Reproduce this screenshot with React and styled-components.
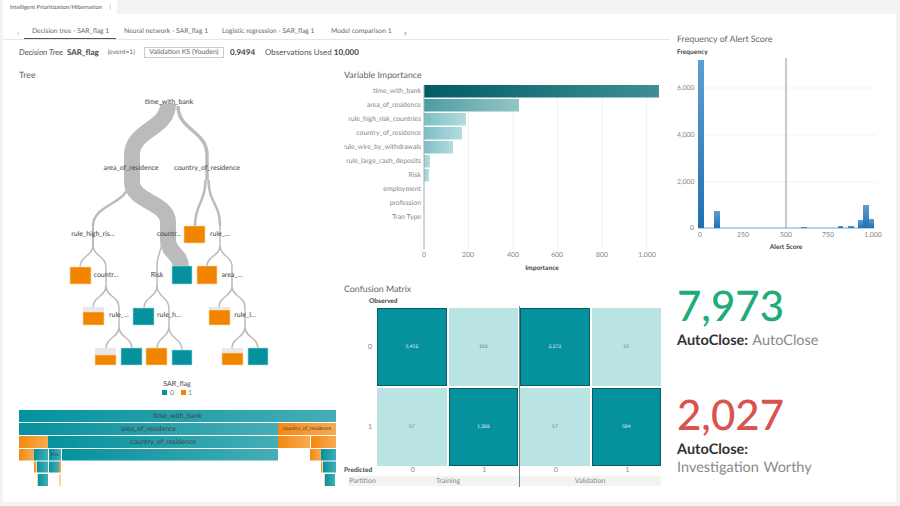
import React from "react";
import styled, { createGlobalStyle } from "styled-components";

const GlobalStyle = createGlobalStyle`
  html, body { margin: 0; padding: 0; background: #f2f3f5; }
  body {
    font-family: Lato, "Noto Sans", "Liberation Sans", sans-serif;
    color: #444;
    text-rendering: geometricPrecision;
  }
`;

const TEAL = "#05929e";
const ORANGE = "#f28500";

const Page = styled.div`
  width: 900px;
  height: 506px;
  box-sizing: border-box;
  padding: 0 4px 4px 3px;
  display: flex;
  flex-direction: column;
  overflow: hidden;
  background: #f2f3f5;
`;
const TopBar = styled.div`
  height: 14px;
  flex: none;
  display: flex;
`;
const ActiveTab = styled.div`
  width: 114px;
  box-sizing: border-box;
  padding-left: 7px;
  background: #fff;
  display: flex;
  align-items: center;
  justify-content: space-between;
  font-size: 5.75px;
  color: #555;
  span:last-child { padding-right: 6px; color: #888; }
`;
const Main = styled.div`
  flex: 1;
  min-height: 0;
  background: #fff;
  display: flex;
`;
const LeftPane = styled.div`
  width: 667px;
  flex: none;
  padding-top: 11px;
`;
const SubTabs = styled.div`
  height: 14px;
  display: flex;
  align-items: center;
  padding-left: 14px;
  border-bottom: 1px solid #e6e6e6;
  font-size: 6.75px;
  color: #666;
`;
const Chevron = styled.span`
  width: ${(p) => p.$w}px;
  color: ${(p) => p.$color};
  font-size: 9px;
`;
const SubTab = styled.div`
  box-sizing: border-box;
  width: ${(p) => p.$w}px;
  height: 14px;
  line-height: 13px;
  padding-left: 8px;
  white-space: nowrap;
  border-bottom: ${(p) => (p.$active ? "1px solid #555" : "none")};
`;
const SummaryRow = styled.div`
  height: 14px;
  margin-top: 5px;
  padding-left: 16px;
  display: flex;
  align-items: center;
  font-size: 8px;
  color: #555;
  white-space: nowrap;
  i { margin-right: 4px; }
  b { color: #444; }
`;
const EventNote = styled.span`
  font-size: 6.6px;
  margin: 0 9px;
  color: #666;
`;
const MetricButton = styled.div`
  box-sizing: border-box;
  width: 80px;
  height: 11px;
  border: 1px solid #ccc;
  font-size: 7px;
  line-height: 9px;
  text-align: center;
  color: #666;
  margin-right: 6px;
`;
const MetricValue = styled.b`
  margin-right: 10px;
`;
const Body = styled.div`
  display: grid;
  grid-template-columns: 325px 326px;
  padding-left: 16px;
  margin-top: 10px;
`;
const Column = styled.div`
  display: flex;
  flex-direction: column;
`;
const Title = styled.div`
  height: 12px;
  line-height: 12px;
  font-size: 8.85px;
  color: #666;
`;
const Chart = styled.svg`
  display: block;
  flex: none;
`;
const TreeText = styled.text`
  font-size: 7px;
  fill: #444;
  text-anchor: middle;
  dominant-baseline: central;
`;
const AxisText = styled.text`
  font-size: 6.9px;
  fill: #888;
  text-anchor: ${(p) => p.$anchor || "middle"};
  dominant-baseline: central;
`;
const AxisTitle = styled.text`
  font-size: 6.6px;
  font-weight: 700;
  fill: #444;
  text-anchor: ${(p) => p.$anchor || "middle"};
  dominant-baseline: central;
`;
const Matrix = styled.div`
  position: relative;
  width: 325px;
  height: 192px;
`;
const MatrixHead = styled.div`
  height: 12px;
  line-height: 12px;
  padding-left: 25px;
  margin-bottom: 1px;
  font-size: 6.6px;
  font-weight: 700;
  color: #444;
`;
const MatrixGrid = styled.div`
  display: grid;
  grid-template-columns: 31px repeat(4, 69.5px);
  grid-auto-rows: 78px;
  gap: 2px;
`;
const RowLabel = styled.div`
  display: flex;
  align-items: center;
  justify-content: flex-end;
  padding-right: 3px;
  font-size: 7px;
  color: #888;
`;
const Cell = styled.div`
  box-sizing: border-box;
  display: flex;
  align-items: center;
  justify-content: center;
  font-size: 5px;
  background: ${(p) => (p.$strong ? TEAL : "#bae3e3")};
  color: ${(p) => (p.$strong ? "#e6f6f6" : "#4d7476")};
  border: ${(p) => (p.$strong ? "1px solid #035f66" : "none")};
`;
const PredictedRow = styled.div`
  display: grid;
  grid-template-columns: 33px repeat(4, 71.5px);
  height: 11px;
  margin-top: -1px;
  line-height: 11px;
  font-size: 7px;
  color: #888;
  text-align: center;
`;
const PredictedLabel = styled.div`
  text-align: left;
  font-size: 6.6px;
  font-weight: 700;
  color: #444;
  white-space: nowrap;
`;
const PartitionRow = styled.div`
  margin-left: 4px;
  width: 313px;
  height: 10px;
  display: grid;
  grid-template-columns: 29px 142px 142px;
  background: #f3f3f3;
  line-height: 10px;
  font-size: 7px;
  color: #888;
  text-align: center;
`;
const PartitionLine = styled.div`
  position: absolute;
  left: 175px;
  top: 11px;
  width: 1px;
  height: 181px;
  background: #808080;
`;
const RightPane = styled.div`
  flex: 1;
  padding: 19px 0 0 7px;
`;
const Kpi = styled.div`
  margin-top: ${(p) => p.$top}px;
`;
const KpiValue = styled.div`
  height: 48px;
  line-height: 48px;
  font-size: 42px;
  font-weight: 500;
  color: ${(p) => p.$color};
`;
const KpiLabel = styled.div`
  margin-top: 3px;
  line-height: 18px;
  font-size: 14.5px;
  word-spacing: 1px;
  color: #8a8a8a;
  b { color: #333; }
`;

const curve = (x1, y1, x2, y2) => {
  const m = (y1 + y2) / 2;
  return `M${x1} ${y1}C${x1} ${m} ${x2} ${m} ${x2} ${y2}`;
};

const treeLinks = [
  [178, 106, 207, 155, 3.5], [207, 155, 207, 180, 3.5],
  [205.5, 180, 195, 226, 2.5], [208.5, 180, 220, 226, 2.5],
  [220, 226, 220, 248, 1.5], [220, 246, 207, 266, 1.5], [220, 246, 232, 266, 1.5],
  [232, 266, 232, 288, 1.5], [232, 286, 219, 307, 1.5], [232, 286, 245, 307, 1.5],
  [245, 307, 245, 328, 1.5], [245, 327, 232, 348, 1.5], [245, 327, 258, 348, 1.5],
  [129, 182, 93, 226, 2.5], [93, 226, 93, 246, 2],
  [93, 245, 80, 267, 1.5], [93, 245, 106, 267, 1.5],
  [106, 267, 106, 288, 1.5], [106, 286, 93, 307, 1.5], [106, 286, 119, 307, 1.5],
  [119, 307, 119, 328, 1.5], [119, 327, 106, 348, 1.5], [119, 327, 132, 348, 1.5],
  [162, 240, 157, 266, 1.5], [157, 266, 157, 288, 1.5],
  [157, 286, 144, 308, 1.5], [157, 286, 169, 308, 1.5],
  [169, 308, 169, 328, 1.5], [169, 327, 157, 348, 1.5], [169, 327, 182, 350, 1.5],
];

const treeNodes = [
  [184, 226, 21, 17, ORANGE], [70, 267, 21, 17, ORANGE], [172, 266, 20, 18, TEAL],
  [197, 266, 20, 18, ORANGE], [133, 308, 21, 17, TEAL],
  [83, 312, 21, 13, ORANGE, 307], [209, 310, 21, 15, ORANGE, 307],
  [95, 355, 21, 10, ORANGE, 348], [121, 348, 21, 17, TEAL], [146, 348, 21, 17, ORANGE],
  [172, 350, 20, 15, TEAL], [222, 353, 21, 12, ORANGE, 348], [248, 348, 20, 17, TEAL],
];

const treeLabels = [
  ["time_with_bank", 169, 102], ["area_of_residence", 131, 168],
  ["country_of_residence", 207, 168], ["rule_high_ris...", 93, 234],
  ["countr...", 169, 234], ["rule_...", 220, 234], ["countr...", 106, 275],
  ["Risk", 157, 275], ["area_...", 232, 275], ["rule_...", 119, 315],
  ["rule_h...", 169, 315], ["rule_l...", 245, 315],
];

const icicle = [
  [19, 410, 317, 12, "t", "time_with_bank"],
  [19, 423, 259, 12, "t", "area_of_residence"], [278, 423, 58, 12, "o", "country_of_residence", 5.2],
  [19, 436, 29, 12, "o"], [48, 436, 230, 12, "t", "country_of_residence"],
  [278, 436, 32, 12, "o"], [311, 436, 25, 12, "o"],
  [19, 449, 15, 11.5, "o"], [34, 449, 14, 11.5, "t"], [49, 449, 12, 11.5, "t", "Risk", 4.5],
  [62, 449, 216, 11.5, "t"], [310, 449, 11, 11.5, "o"], [321, 449, 15, 11.5, "t"],
  [34, 461.5, 2.5, 11, "o"], [37, 461.5, 11, 11, "t"], [49, 461.5, 10, 11, "t"], [59, 461.5, 2, 11, "o"],
  [321, 461.5, 1.5, 11, "o"], [323, 461.5, 13, 11, "t"],
  [37, 474, 1.5, 12, "l"], [38, 474, 10, 12, "t"], [59, 474, 2, 12, "l"],
  [324, 474, 1.5, 12, "l"], [325, 474, 10, 12, "t"],
];

const importance = [
  ["time_with_bank", 659, "vi0"], ["area_of_residence", 519, "vi1"],
  ["rule_high_risk_countries", 466, "vi2"], ["country_of_residence", 462, "vi2"],
  ["rule_wire_by_withdrawals", 453, "vi2"], ["rule_large_cash_deposits", 430, "vi3"],
  ["Risk", 429, "vi3"], ["employment"], ["profession"], ["Tran Type"],
];

const histogram = [
  [698, 704, 60], [714, 720, 211], [801, 807, 227], [838, 843, 226],
  [848, 854, 226], [858, 863, 220], [863, 869, 205], [869, 874, 219],
];

const matrixRows = [
  ["0", [["5,452", 1], ["103", 0], ["2,373", 1], ["51", 0]]],
  ["1", [["57", 0], ["1,388", 1], ["17", 0], ["584", 1]]],
];

const HGrad = ({ id, from, to }) => (
  <linearGradient id={id} x1="0" x2="1" y1="0" y2="0">
    <stop offset="0" stopColor={from} />
    <stop offset="1" stopColor={to} />
  </linearGradient>
);

const TreeChart = () => (
  <Chart width="325" height="324" viewBox="19 81 325 324">
    <path
      d={`${curve(168, 104, 132, 155)}L132 182${curve(132, 182, 168, 222).replace("M132 182", "")}L168 240${curve(168, 240, 181, 267).replace("M168 240", "")}`}
      fill="none" stroke="#bbb" strokeWidth="16"
    />
    {treeLinks.map(([x1, y1, x2, y2, w], i) => (
      <path key={i} d={curve(x1, y1, x2, y2)} fill="none" stroke="#bbb" strokeWidth={w} />
    ))}
    {treeNodes.map(([x, y, w, h, color, capTop], i) => (
      <g key={i}>
        {capTop && <rect x={x} y={capTop} width={w} height={y - capTop} fill="#e8e8e8" />}
        <rect x={x} y={y} width={w} height={h} fill={color}
          stroke={color === TEAL ? "#a5dcdf" : "#fbd6a6"} strokeWidth="0.6" />
      </g>
    ))}
    {treeLabels.map(([text, x, y], i) => (
      <TreeText key={i} x={x} y={y}>{text}</TreeText>
    ))}
    <TreeText x="177" y="384">SAR_flag</TreeText>
    <rect x="162" y="390" width="5" height="5" fill={TEAL} />
    <AxisText x="172" y="392.5">0</AxisText>
    <rect x="181" y="390" width="5" height="5" fill={ORANGE} />
    <AxisText x="190" y="392.5">1</AxisText>
  </Chart>
);

const IcicleChart = () => (
  <Chart width="325" height="85" viewBox="19 405 325 85">
    <defs>
      <HGrad id="ict" from="#05929e" to="#45adb6" />
      <HGrad id="ico" from="#f28a10" to="#f9aa52" />
      <HGrad id="icl" from="#fbd3a0" to="#fbd3a0" />
    </defs>
    {icicle.map(([x, y, w, h, kind, text, size], i) => (
      <g key={i}>
        <rect x={x} y={y} width={w} height={h} fill={`url(#ic${kind})`} />
        {text && (
          <TreeText x={x + w / 2} y={y + h / 2} style={size ? { fontSize: size } : undefined}>{text}</TreeText>
        )}
      </g>
    ))}
  </Chart>
);

const ImportanceChart = () => (
  <Chart width="325" height="202" viewBox="344 81 325 202">
    <defs>
      <HGrad id="vi0" from="#005c63" to="#3f8f95" />
      <HGrad id="vi1" from="#4a9da3" to="#94c5c8" />
      <HGrad id="vi2" from="#7cbfc5" to="#b3dcde" />
      <HGrad id="vi3" from="#94d0d5" to="#b3e0e2" />
    </defs>
    {[468.5, 513, 557.5, 602, 646.5].map((x) => (
      <line key={x} x1={x} x2={x} y1="85" y2="249" stroke="#ececec" strokeWidth="0.8" />
    ))}
    {importance.map(([name, end, fill], i) => (
      <g key={name}>
        <AxisText $anchor="end" x="421" y={91 + i * 14}>{name}</AxisText>
        {end && <rect x="424" y={85 + i * 14} width={end - 424} height="12.5" fill={`url(#${fill})`} />}
      </g>
    ))}
    <line x1="424" x2="424" y1="85" y2="249" stroke="#aaa" strokeWidth="1" />
    {[["0", 424], ["200", 468], ["400", 513], ["600", 557], ["800", 602], ["1,000", 647]].map(([t, x]) => (
      <AxisText key={t} x={x} y="255">{t}</AxisText>
    ))}
    <AxisTitle x="542" y="268">Importance</AxisTitle>
  </Chart>
);

const AlertChart = () => (
  <Chart width="216" height="210" viewBox="677 45 216 210">
    <defs>
      <linearGradient id="hist" x1="0" x2="0" y1="0" y2="1">
        <stop offset="0" stopColor="#5f9fd2" />
        <stop offset="1" stopColor="#1f70b2" />
      </linearGradient>
    </defs>
    <AxisTitle $anchor="start" x="677" y="51.5">Frequency</AxisTitle>
    {[["6,000", 88], ["4,000", 135], ["2,000", 182], ["0", 228]].map(([t, y]) => (
      <g key={t}>
        {y < 228 && <line x1="700" x2="877" y1={y} y2={y} stroke="#f0f0f0" strokeWidth="0.8" />}
        <AxisText $anchor={y < 228 ? "start" : "end"} x={y < 228 ? 677 : 694} y={y}>{t}</AxisText>
      </g>
    ))}
    <line x1="698" x2="874" y1="228" y2="228" stroke="#6fa5d1" strokeWidth="1" />
    {histogram.map(([x1, x2, top]) => (
      <rect key={x1} x={x1} y={top} width={x2 - x1} height={228 - top} fill="url(#hist)" />
    ))}
    <line x1="786" x2="786" y1="58" y2="228" stroke="#777" strokeWidth="0.8" />
    {[["0", 700], ["250", 743], ["500", 786], ["750", 828], ["1,000", 873]].map(([t, x]) => (
      <AxisText key={t} x={x} y="234.5">{t}</AxisText>
    ))}
    <AxisTitle x="786" y="246.5">Alert Score</AxisTitle>
  </Chart>
);

const ConfusionMatrix = () => (
  <Matrix>
    <MatrixHead>Observed</MatrixHead>
    <MatrixGrid>
      {matrixRows.map(([label, cells]) => (
        <React.Fragment key={label}>
          <RowLabel>{label}</RowLabel>
          {cells.map(([value, strong], i) => (
            <Cell key={i} $strong={!!strong}>{value}</Cell>
          ))}
        </React.Fragment>
      ))}
    </MatrixGrid>
    <PredictedRow>
      <PredictedLabel>Predicted</PredictedLabel>
      <span>0</span><span>1</span><span>0</span><span>1</span>
    </PredictedRow>
    <PartitionRow>
      <span>Partition</span><span>Training</span><span>Validation</span>
    </PartitionRow>
    <PartitionLine />
  </Matrix>
);

export default function App() {
  return (
    <Page>
      <GlobalStyle />
      <TopBar>
        <ActiveTab>
          <span>Intelligent Prioritization/Hibernation</span>
          <span>|</span>
        </ActiveTab>
      </TopBar>
      <Main>
        <LeftPane>
          <SubTabs>
            <Chevron $w={7} $color="#bbb">‹</Chevron>
            <SubTab $w={92} $active>Decision tree - SAR_flag 1</SubTab>
            <SubTab $w={98}>Neural network - SAR_flag 1</SubTab>
            <SubTab $w={109}>Logistic regression - SAR_flag 1</SubTab>
            <SubTab $w={81}>Model comparison 1</SubTab>
            <Chevron $w={7} $color="#777">›</Chevron>
          </SubTabs>
          <SummaryRow>
            <i>Decision Tree</i>
            <b>SAR_flag</b>
            <EventNote>(event=1)</EventNote>
            <MetricButton>Validation KS (Youden)</MetricButton>
            <MetricValue>0.9494</MetricValue>
            <span>Observations Used&nbsp;</span>
            <b>10,000</b>
          </SummaryRow>
          <Body>
            <Column>
              <Title>Tree</Title>
              <TreeChart />
              <IcicleChart />
            </Column>
            <Column>
              <Title>Variable Importance</Title>
              <ImportanceChart />
              <Title>Confusion Matrix</Title>
              <ConfusionMatrix />
            </Column>
          </Body>
        </LeftPane>
        <RightPane>
          <Title>Frequency of Alert Score</Title>
          <AlertChart />
          <Kpi $top={26}>
            <KpiValue $color="#1fab7c">7,973</KpiValue>
            <KpiLabel><b>AutoClose:</b> AutoClose</KpiLabel>
          </Kpi>
          <Kpi $top={40}>
            <KpiValue $color="#d9534f">2,027</KpiValue>
            <KpiLabel><b>AutoClose:</b><br />Investigation Worthy</KpiLabel>
          </Kpi>
        </RightPane>
      </Main>
    </Page>
  );
}
